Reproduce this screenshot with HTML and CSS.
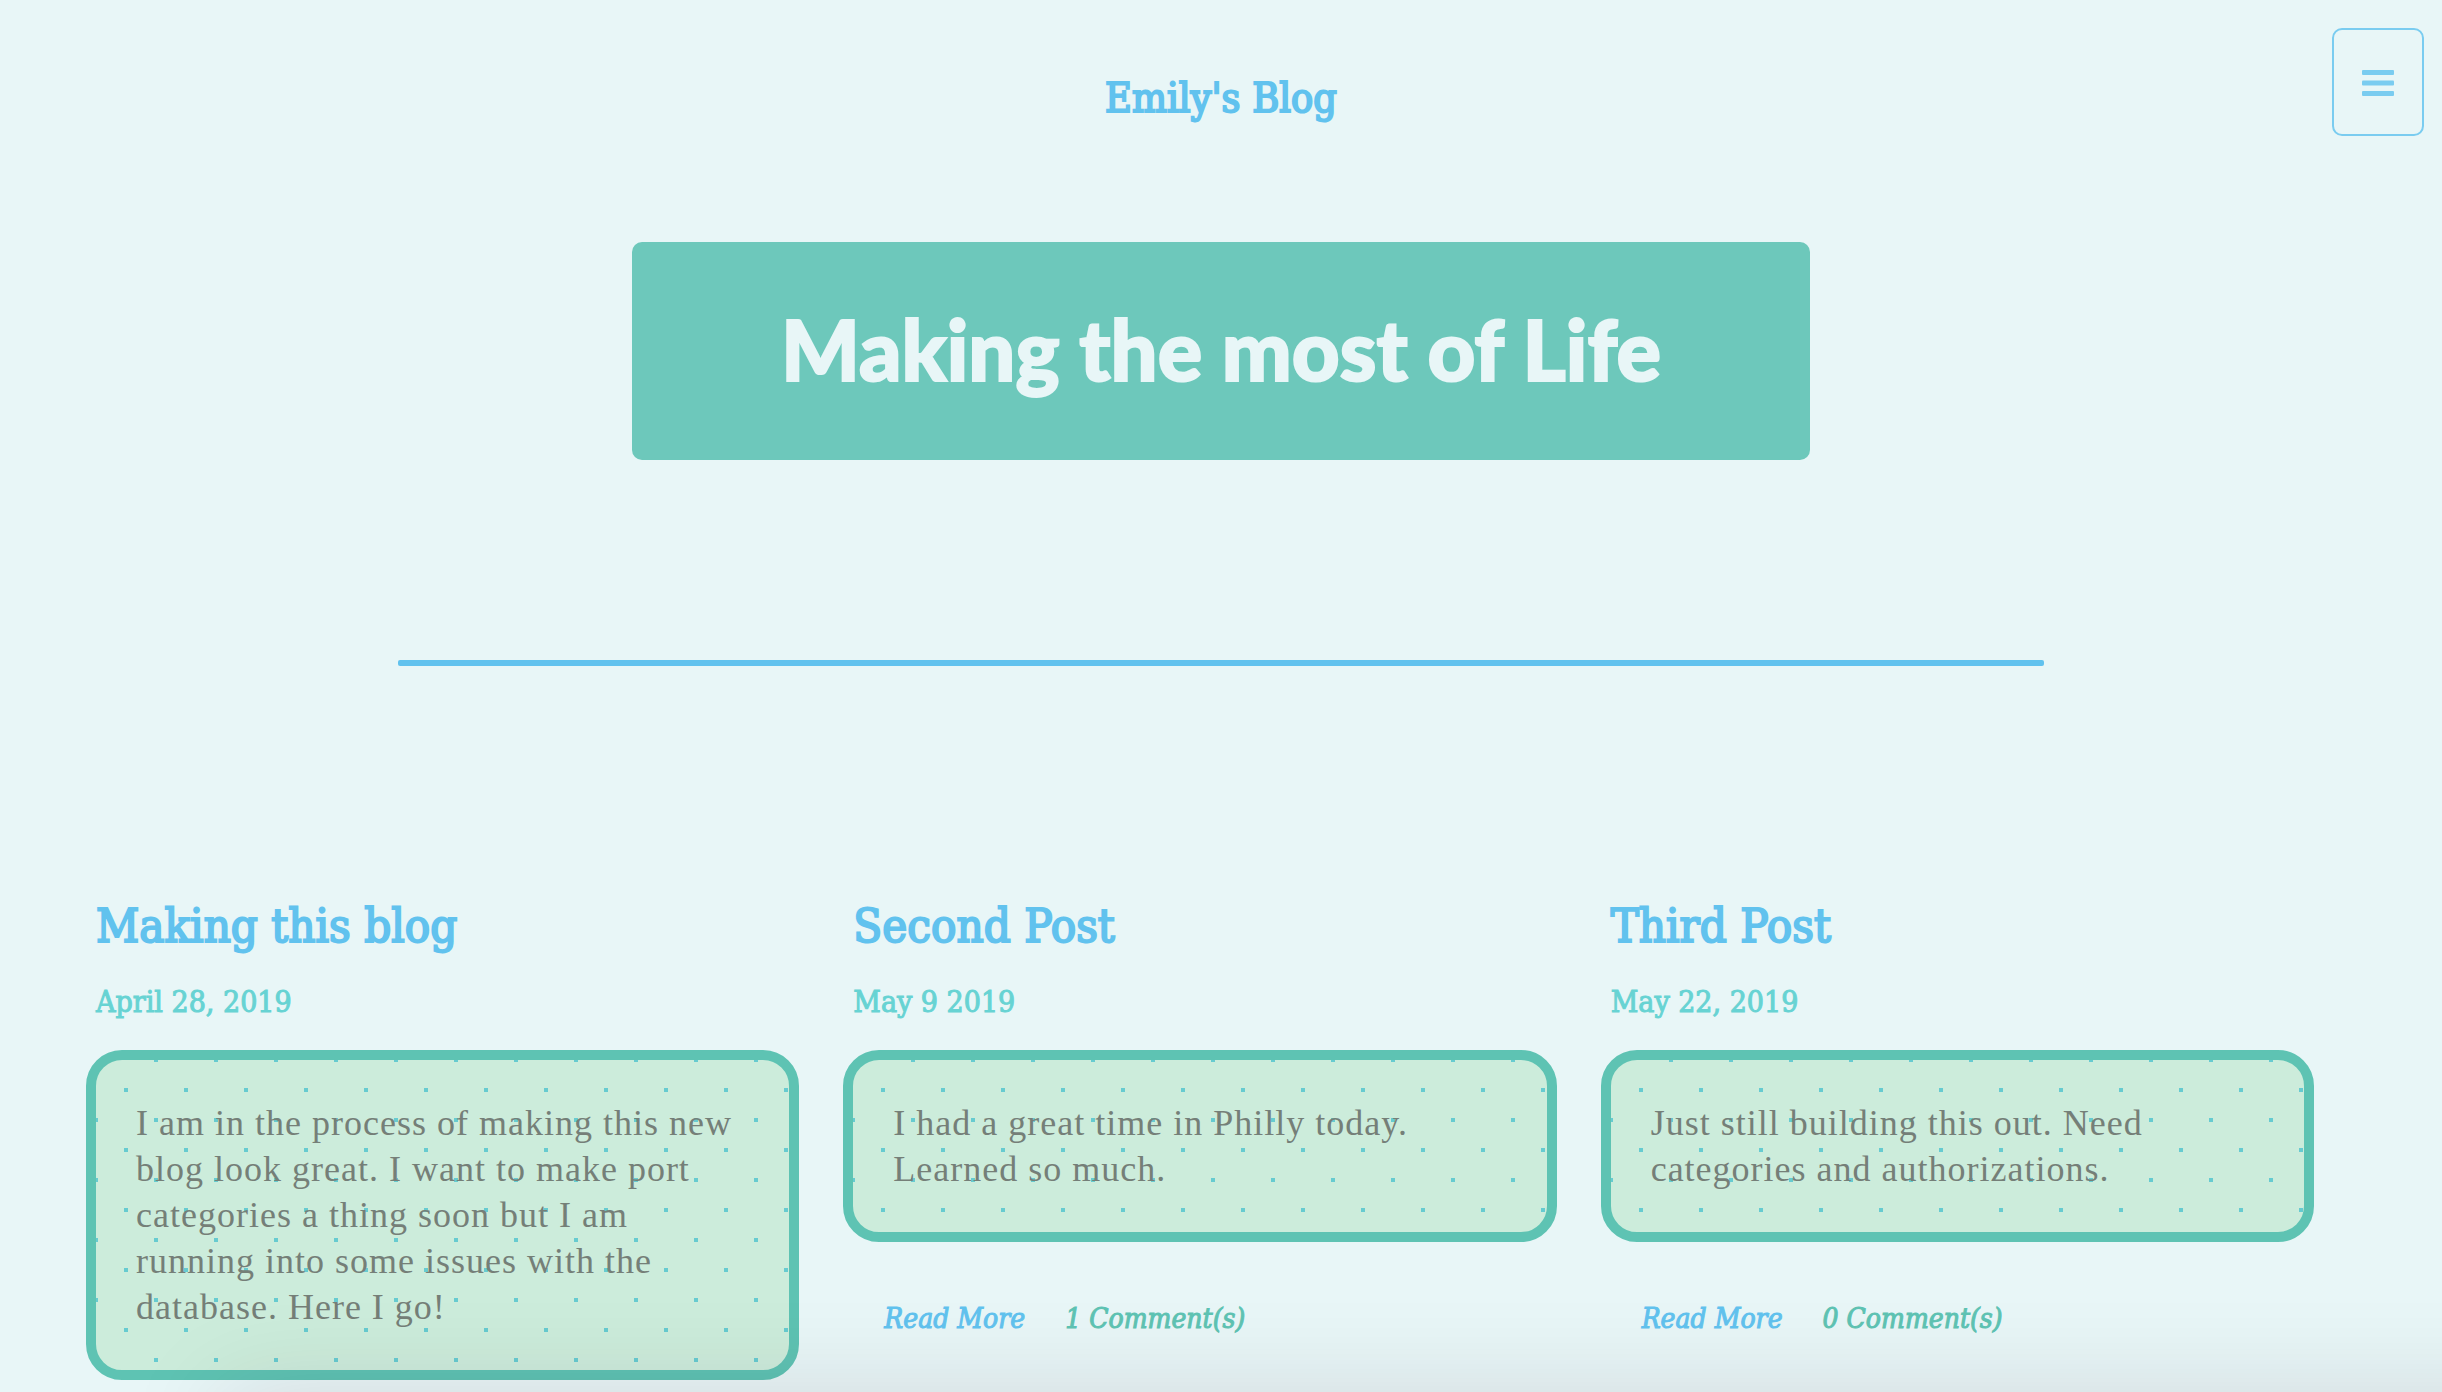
FILE: index.html
```html
<!DOCTYPE html>
<html lang="en">
<head>
  <meta charset="utf-8">
  <meta name="viewport" content="width=device-width, initial-scale=1">
  <title>Emily's Blog</title>
  <link rel="stylesheet" href="styles.css">
</head>
<body>
  <header class="site-header">
    <a class="site-name" href="#">Emily's Blog</a>
    <button class="menu-button" type="button">
      <svg class="menu-icon" viewBox="0 0 32 28" aria-hidden="true">
        <rect x="0" y="1" width="32" height="5" rx="1"/>
        <rect x="0" y="11.5" width="32" height="5" rx="1"/>
        <rect x="0" y="22" width="32" height="5" rx="1"/>
      </svg>
    </button>
  </header>

  <main>
    <h1 class="hero">Making the most of Life</h1>
    <hr class="divider">

    <section class="posts">
      <article class="post">
        <h2 class="post-title">Making this blog</h2>
        <p class="post-date">April 28, 2019</p>
        <p class="post-body">I am in the process of making this new blog look great. I want to make port categories a thing soon but I am running into some issues with the database. Here I go!</p>
      </article>

      <article class="post">
        <h2 class="post-title">Second Post</h2>
        <p class="post-date">May 9 2019</p>
        <p class="post-body">I had a great time in Philly today. Learned so much.</p>
        <div class="post-links">
          <a class="read-more" href="#">Read More</a>
          <a class="comments" href="#">1 Comment(s)</a>
        </div>
      </article>

      <article class="post">
        <h2 class="post-title">Third Post</h2>
        <p class="post-date">May 22, 2019</p>
        <p class="post-body">Just still building this out. Need categories and authorizations.</p>
        <div class="post-links">
          <a class="read-more" href="#">Read More</a>
          <a class="comments" href="#">0 Comment(s)</a>
        </div>
      </article>
    </section>
  </main>

  <div class="bottom-shade"></div>
</body>
</html>
```
FILE: styles.css
```css
:root {
  --page: #e8f6f7;
  --blue: #61c2ee;
  --teal: #5ec3b3;
  --aqua: #67d3d3;
  --slab: "DejaVu Serif Condensed", "DejaVu Serif", serif;
}

* {
  box-sizing: border-box;
}

body {
  margin: 0;
  min-height: 100vh;
  background: var(--page);
  font-family: "Liberation Serif", serif;
}

a {
  text-decoration: none;
}

.site-header {
  padding-top: 74px;
  text-align: center;
}

.site-name {
  display: inline-block;
  color: var(--blue);
  font: 41px/48px var(--slab);
  -webkit-text-stroke: 2px currentColor;
  vertical-align: top;
}

.menu-button {
  position: absolute;
  top: 28px;
  right: 18px;
  display: flex;
  align-items: center;
  justify-content: center;
  width: 92px;
  height: 108px;
  padding: 2px 0 0;
  border: 2px solid #7accf0;
  border-radius: 10px;
  background: transparent;
}

.menu-icon {
  width: 32px;
  height: 28px;
  fill: #7accf0;
}

.hero {
  width: 1178px;
  max-width: 90%;
  margin: 120px auto 0;
  padding: 58px 60px 62px;
  border-radius: 10px;
  background: #6dc8bb;
  color: var(--page);
  font: 900 83px/98px Lato, sans-serif;
  -webkit-text-stroke: 2px currentColor;
  text-align: center;
}

.divider {
  width: 1646px;
  max-width: 90%;
  height: 6px;
  margin: 200px auto 0;
  border: 0;
  border-radius: 2px;
  background: var(--blue);
}

.posts {
  display: grid;
  grid-template-columns: repeat(3, 1fr);
  align-items: start;
  gap: 44px;
  margin-top: 232px;
  padding: 0 128px 0 86px;
}

.post-title,
.post-date {
  padding: 0 10px;
}

.post-title {
  margin: 0;
  color: var(--blue);
  font: 47px/56px var(--slab);
  -webkit-text-stroke: 2px currentColor;
}

.post-date {
  margin: 30px 0;
  color: var(--aqua);
  font: 30px/36px var(--slab);
  -webkit-text-stroke: 1px currentColor;
}

.post-body {
  margin: 0;
  padding: 40px;
  border: 10px solid var(--teal);
  border-radius: 36px;
  background-color: #ccecdb;
  background-image:
    radial-gradient(#67cbd0 6%, transparent 6%),
    radial-gradient(#67cbd0 6%, transparent 6%);
  background-position: 0 0, 30px 30px;
  background-size: 60px 60px;
  color: #757f78;
  font-size: 36px;
  line-height: 46px;
  letter-spacing: 1px;
}

.post-links {
  display: flex;
  gap: 40px;
  margin-top: 60px;
  padding-left: 41px;
  font: italic 28px/34px var(--slab);
  -webkit-text-stroke: 1px currentColor;
}

.read-more {
  color: var(--blue);
}

.comments {
  color: var(--teal);
}

/* Soft shadow rising from below the lower edge of the window */
.bottom-shade {
  position: fixed;
  right: -200px;
  bottom: -120px;
  left: 220px;
  height: 120px;
  box-shadow: 0 0 100px rgba(40, 20, 30, 0.12);
  pointer-events: none;
}
```
